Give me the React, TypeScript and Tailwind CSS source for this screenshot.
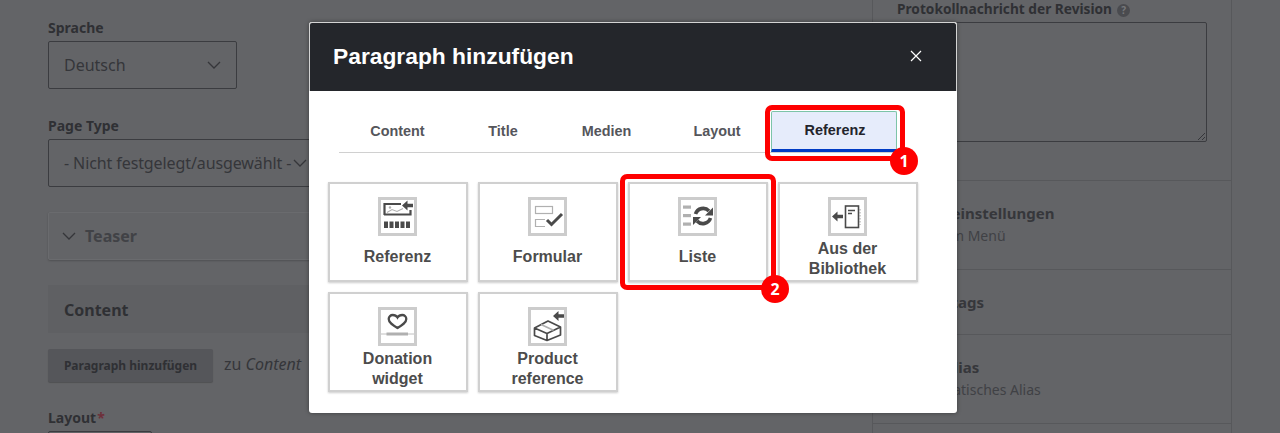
import type { ReactNode } from "react";

const ink = "#4a4a4a";
const grey = "#b0b0b0";

function IconBox({ children }: { children: ReactNode }) {
  return (
    <div className="w-[39px] h-[39px] shrink-0 border-[3px] border-[#cccccc] bg-white">
      <svg width="33" height="33" viewBox="0 0 33 33" fill="none">
        {children}
      </svg>
    </div>
  );
}

function ArrowLeft({ x, y }: { x: number; y: number }) {
  return <path d={`M${x} ${y}l5.500-5v3.200h5.500v3.600h-5.500v3.200z`} fill={ink} />;
}

const icons: Record<string, ReactNode> = {
  referenz: (
    <>
      <path d="M3.500 15V4H20M3 14.500H29.500V10" stroke={ink} strokeWidth="2.200" />
      <path d="M6 12.500l5-3 5 2 6-3" stroke={grey} strokeWidth="1.100" />
      <circle cx="9" cy="7.500" r="1.200" fill={grey} />
      <ArrowLeft x={21} y={5.500} />
      {[3, 8.500, 14, 19.500, 25].map((x) => (
        <rect key={x} x={x} y="21.500" width="4" height="6.500" fill={ink} />
      ))}
    </>
  ),
  formular: (
    <>
      <rect x="4.500" y="6.500" width="17" height="7" stroke={grey} strokeWidth="1.200" />
      <path d="M14 19.500H4.500v7H14" stroke={grey} strokeWidth="1.200" />
      <path d="M16 20l4.500 4.500L31 14" stroke={ink} strokeWidth="3" />
    </>
  ),
  liste: (
    <>
      <rect x="2" y="5.500" width="8" height="3.200" fill={grey} />
      <rect x="2" y="14" width="8" height="3.200" fill={grey} />
      <rect x="2" y="22.500" width="8" height="3.200" fill={grey} />
      <path d="M14.500 14a8 8 0 0 1 13.500-3" stroke={ink} strokeWidth="3.600" />
      <path d="M32 7.500v8h-8z" fill={ink} />
      <path d="M29.500 18a8 8 0 0 1-13.500 3" stroke={ink} strokeWidth="3.600" />
      <path d="M12 25v-8h8z" fill={ink} />
    </>
  ),
  bibliothek: (
    <>
      <ArrowLeft x={1} y={16.500} />
      <rect x="14.500" y="6" width="13" height="21.500" stroke={ink} strokeWidth="1.600" />
      <path d="M17 10.500h7M17 13.500h4" stroke={ink} strokeWidth="1.400" />
      <path d="M28.800 9v16" stroke={grey} strokeWidth="1.600" strokeDasharray="1.500 1.500" />
    </>
  ),
  donation: (
    <>
      <path
        d="M16.500 18c-4.500-2.700-8.800-5.300-8.800-9 0-2.600 2-4 4-4 2.200 0 3.900 1.100 4.800 2.500.9-1.400 2.600-2.500 4.800-2.500 2 0 4 1.400 4 4 0 3.700-4.300 6.300-8.800 9z"
        stroke={ink}
        strokeWidth="2.300"
      />
      <path d="M0 24h33" stroke={grey} strokeWidth="0.800" />
      <rect x="5.500" y="22.500" width="21.500" height="3" fill={grey} />
    </>
  ),
  product: (
    <>
      <ArrowLeft x={22} y={6} />
      <path
        d="M3.500 18l13.500-7L29.500 17l-13.500 6.500zM3.500 18v7.500L16 30.500l13.500-5.500v-8M16 23.500v7"
        stroke={ink}
        strokeWidth="1.700"
        strokeLinejoin="round"
      />
      <path d="M10 14.500l12.500 5.700" stroke={grey} strokeWidth="1.600" />
    </>
  ),
};

function Card({ icon, lines }: { icon: string; lines: string[] }) {
  return (
    <div className="w-[140px] h-[100px] border-2 border-[#d0d0d0] shadow-[0_1px_2px_rgba(0,0,0,0.2)] bg-white flex flex-col items-center pt-[13px] pr-[1px]">
      <IconBox>{icons[icon]}</IconBox>
      <div
        className={
          lines.length > 1
            ? "mt-[3px] text-center text-base font-bold leading-[20px] text-[#4c4c4c]"
            : "mt-[11px] text-center text-base font-bold leading-[20px] text-[#4c4c4c]"
        }
      >
        {lines.map((l) => (
          <div key={l}>{l}</div>
        ))}
      </div>
    </div>
  );
}

function Chevron({ className }: { className: string }) {
  return (
    <svg className={className} width="14" height="8" viewBox="0 0 14 8" fill="none">
      <path d="M1 1l6 6 6-6" stroke="#35363a" strokeWidth="1.300" />
    </svg>
  );
}

function Badge({ n, className }: { n: number; className: string }) {
  return (
    <span
      className={`absolute w-[28px] h-[28px] rounded-full bg-[#fe0000] text-white text-base font-bold flex items-center justify-center ${className}`}
    >
      {n}
    </span>
  );
}

function SideRow({ title, sub, h }: { title: string; sub?: string; h: string }) {
  return (
    <div className={`${h} pl-[36px] border-b border-[#57585b] flex flex-col justify-center`}>
      <div className="text-[15px] font-bold leading-[22px] text-[#36373b]">{title}</div>
      {sub && <div className="text-sm leading-[24px] text-[#404145]">{sub}</div>}
    </div>
  );
}

export default function App() {
  return (
    <div className="relative w-[1280px] h-[433px] overflow-hidden bg-[#636467] font-['Noto_Sans',sans-serif] text-[#35363a]">
      <div className="flex h-full">
        {/* left form */}
        <div className="w-[872px] pl-[48px] pt-[19px] shrink-0">
          <div className="text-sm font-bold leading-[18px] text-[#2f3034]">Sprache</div>
          <div className="mt-[4px] w-[189px] h-[48px] border border-[#3b3c40] rounded-[2px] pl-[15px] pr-[15px] flex items-center justify-between text-base">
            Deutsch
            <Chevron className="" />
          </div>
          <div className="mt-[28px] text-sm font-bold leading-[18px] text-[#2f3034]">Page Type</div>
          <div className="mt-[4px] w-[300px] h-[48px] border border-[#3b3c40] rounded-[2px] pl-[15px] flex items-center text-base tracking-[-0.1px] whitespace-nowrap">
            - Nicht festgelegt/ausgewählt -
            <Chevron className="ml-[2px]" />
          </div>
          <div className="mt-[25px] w-[780px] h-[48px] border border-[#6a6b6e] rounded-[2px] shadow-[0_1px_2px_rgba(0,0,0,0.2)] pl-[13px] flex items-center gap-[9px] text-base font-bold text-[#414246]">
            <Chevron className="" />
            Teaser
          </div>
          <div className="mt-[25px] w-[780px] h-[48px] bg-[#5f6063] pl-[16px] pt-[2px] flex items-center text-base font-bold text-[#2f3034]">
            Content
          </div>
          <div className="mt-[16px] flex items-center gap-[11px]">
            <div className="w-[165px] h-[33px] bg-[#55565a] rounded-[2px] shadow-[0_1px_1px_rgba(0,0,0,0.2)] flex items-center justify-center text-xs font-bold text-[#2f3034]">
              Paragraph hinzufügen
            </div>
            <div className="text-base pb-[3px]">
              zu <em>Content</em>
            </div>
          </div>
          <div className="mt-[27px] text-sm font-bold leading-[18px] text-[#2f3034]">
            Layout<span className="ml-[1px] text-[#6e2f3a]">*</span>
          </div>
          <div className="mt-[4px] w-[104px] h-[48px] border border-[#3b3c40] rounded-[2px]" />
        </div>

        {/* right sidebar */}
        <div className="w-[360px] h-full border-l border-r border-[#57585b] shrink-0">
          <div className="h-[181px] pl-[24px] border-b border-[#57585b]">
            <div className="flex items-center gap-[5px] text-[13.7px] font-bold leading-[18px] text-[#2f3034]">
              Protokollnachricht der Revision
              <span className="w-[13px] h-[13px] rounded-full bg-[#4a4b4f] text-[10px] text-[#77787b] flex items-center justify-center mt-[2px]">
                ?
              </span>
            </div>
            <div className="relative mt-[4px] w-[310px] h-[120px] border border-[#3b3c40] rounded-[2px]">
              <svg className="absolute right-0 bottom-0" width="9" height="9" viewBox="0 0 9 9">
                <path d="M1 8l7-7M5 8l3-3" stroke="#35363a" strokeWidth="1" />
              </svg>
            </div>
          </div>
          <SideRow h="h-[89px]" title="Menüeinstellungen" sub="Nicht im Menü" />
          <SideRow h="h-[65px]" title="Meta tags" />
          <SideRow h="h-[89px]" title="URL-Alias" sub="Automatisches Alias" />
        </div>
      </div>

      {/* modal */}
      <div className="absolute left-[309px] top-[22px] w-[648px] h-[391px] bg-white rounded-[3px] font-['Liberation_Sans',sans-serif] shadow-[0_0_4px_rgba(0,0,0,0.4)]">
        <div className="h-[69px] bg-[#24262b] border border-[#d4d4d4] border-b-0 rounded-t-[3px] flex items-center justify-between pl-[23px] pr-[34px] pb-[2px]">
          <span className="text-[22.8px] font-bold text-white">Paragraph hinzufügen</span>
          <svg width="12" height="12" viewBox="0 0 12 12" fill="none">
            <path d="M1 1l10 10M11 1L1 11" stroke="#ffffff" strokeWidth="1.200" />
          </svg>
        </div>

        <div className="mt-[20px] ml-[30px] w-[558px] h-[42px] border-b border-[#d0d0d0] flex text-[14.4px] font-bold text-[#55565b]">
          <div className="w-[117px] flex items-center justify-center">Content</div>
          <div className="w-[94px] flex items-center justify-center">Title</div>
          <div className="w-[113px] flex items-center justify-center">Medien</div>
          <div className="w-[108px] flex items-center justify-center">Layout</div>
          <div className="w-[126px] pl-[2px] flex items-center justify-center bg-[#e6ecfb] border border-[#7cc4a8] border-b-[3px] border-b-[#003cc5] rounded-t-[2px] text-[#23242c]">
            Referenz
          </div>
        </div>

        <div className="mt-[29px] ml-[19px] grid grid-cols-[140px_140px_140px_140px] gap-x-[10px] gap-y-[10px]">
          <Card icon="referenz" lines={["Referenz"]} />
          <Card icon="formular" lines={["Formular"]} />
          <Card icon="liste" lines={["Liste"]} />
          <Card icon="bibliothek" lines={["Aus der", "Bibliothek"]} />
          <Card icon="donation" lines={["Donation", "widget"]} />
          <Card icon="product" lines={["Product", "reference"]} />
        </div>
      </div>

      {/* red annotations */}
      <div className="absolute left-[765px] top-[105px] w-[140px] h-[56px] border-[5px] border-[#fe0000] rounded-[7px]" />
      <Badge n={1} className="left-[890px] top-[147px]" />
      <div className="absolute left-[620px] top-[174px] w-[156px] h-[116px] border-[5px] border-[#fe0000] rounded-[7px]" />
      <Badge n={2} className="left-[761px] top-[275px]" />
    </div>
  );
}
